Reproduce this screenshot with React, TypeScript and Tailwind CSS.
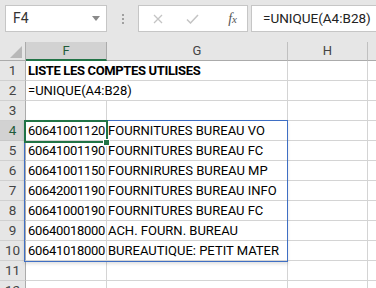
import React from "react";

type Row = { n: number; f?: string; g?: string; bold?: boolean; span?: boolean };

const rows: Row[] = [
  { n: 1, f: "LISTE LES COMPTES UTILISES", bold: true, span: true },
  { n: 2, f: "=UNIQUE(A4:B28)", span: true },
  { n: 3 },
  { n: 4, f: "60641001120", g: "FOURNITURES BUREAU VO" },
  { n: 5, f: "60641001190", g: "FOURNITURES BUREAU FC" },
  { n: 6, f: "60641001150", g: "FOURNIRURES BUREAU MP" },
  { n: 7, f: "60642001190", g: "FOURNITURES BUREAU INFO" },
  { n: 8, f: "60641000190", g: "FOURNITURES BUREAU FC" },
  { n: 9, f: "60640018000", g: "ACH. FOURN. BUREAU" },
  { n: 10, f: "60641018000", g: "BUREAUTIQUE: PETIT MATER" },
  { n: 11 },
  { n: 12 },
];

const font = { fontFamily: "Roboto, 'Liberation Sans', sans-serif" };

export default function App() {
  return (
    <div className="w-[376px] h-[288px] overflow-hidden bg-white text-[#222]" style={font}>
      {/* Formula bar */}
      <div className="h-[42px] bg-[#e6e6e6] flex items-start pt-[5px] pl-[5px]">
        <div className="w-[102px] h-[27px] bg-white border border-[#c6c6c6] flex items-center pl-[7px] pr-[6px] justify-between">
          <span className="text-[14px] text-[#333]">F4</span>
          <svg width="8" height="5" viewBox="0 0 8 5"><path d="M0 0h8L4 5z" fill="#8a8a8a" /></svg>
        </div>
        <div className="w-[31px] h-[27px] flex flex-col items-center justify-center gap-[2px]">
          <span className="w-[2px] h-[2px] bg-[#a0a0a0]" />
          <span className="w-[2px] h-[2px] bg-[#a0a0a0]" />
          <span className="w-[2px] h-[2px] bg-[#a0a0a0]" />
        </div>
        <div className="w-[110px] h-[27px] bg-white border border-[#c6c6c6] flex items-center">
          <svg className="ml-[14px]" width="10" height="10" viewBox="0 0 10 10">
            <path d="M1 1L9 9M9 1L1 9" stroke="#c4c4c4" strokeWidth="1.3" />
          </svg>
          <svg className="ml-[23px]" width="13" height="10" viewBox="0 0 13 10">
            <path d="M1 5.5L4.5 9L12 1" stroke="#c4c4c4" strokeWidth="1.5" fill="none" />
          </svg>
          <span
            className="ml-auto mr-[10px] text-[14px] italic text-[#555]"
            style={{ fontFamily: "'Liberation Serif', serif" }}
          >
            f<span className="text-[11px]">x</span>
          </span>
        </div>
        <div className="ml-[3px] flex-1 h-[27px] bg-white border border-[#c6c6c6] border-r-0 flex items-center pl-[11px]">
          <span className="text-[13.5px] text-[#222] whitespace-nowrap">=UNIQUE(A4:B28)</span>
        </div>
      </div>

      {/* Grid */}
      <div className="relative">
        <div className="grid grid-cols-[26px_81px_181px_80px_1fr]">
          {/* header */}
          <div className="h-[19px] bg-[#e6e6e6] border-r border-b border-[#ababab] relative">
            <svg className="absolute right-[3px] bottom-[2px]" width="12" height="12" viewBox="0 0 12 12">
              <path d="M12 0V12H0z" fill="#b8b8b8" />
            </svg>
          </div>
          <div className="h-[19px] bg-[#d2d2d2] border-r border-[#ababab] border-b-2 border-b-[#217346] flex items-center justify-center text-[13px] text-[#1f5c3a]">
            F
          </div>
          <div className="h-[19px] bg-[#e6e6e6] border-r border-b border-[#c0c0c0] border-b-[#ababab] flex items-center justify-center text-[13px] text-[#444]">
            G
          </div>
          <div className="h-[19px] bg-[#e6e6e6] border-r border-b border-[#c0c0c0] border-b-[#ababab] flex items-center justify-center text-[13px] text-[#444]">
            H
          </div>
          <div className="h-[19px] bg-[#e6e6e6] border-b border-[#ababab]" />

          {rows.map((r) => (
            <React.Fragment key={r.n}>
              <div
                className={
                  r.n === 4
                    ? "h-[20px] bg-[#d2d2d2] border-r border-b border-[#ababab] border-b-[#c8c8c8] flex items-center justify-center text-[13.5px] text-[#1f5c3a]"
                    : "h-[20px] bg-[#e6e6e6] border-r border-b border-[#ababab] border-b-[#d0d0d0] flex items-center justify-center text-[13.5px] text-[#444]"
                }
              >
                {r.n}
              </div>
              {r.span ? (
                <div
                  className={
                    r.bold
                      ? "col-span-2 h-[20px] border-r border-b border-[#d4d4d4] flex items-center pl-[2px] whitespace-nowrap text-[13px] text-black font-bold tracking-[-0.35px]"
                      : "col-span-2 h-[20px] border-r border-b border-[#d4d4d4] flex items-center pl-[2px] whitespace-nowrap text-[13px] text-black"
                  }
                >
                  {r.f}
                </div>
              ) : (
                <>
                  <div className="h-[20px] border-r border-b border-[#d4d4d4] flex items-center pl-[2px] whitespace-nowrap text-[13px] tracking-[-0.3px] text-black">
                    {r.f}
                  </div>
                  <div className="h-[20px] border-r border-b border-[#d4d4d4] flex items-center pl-[1px] whitespace-nowrap overflow-hidden text-[13px] text-black">
                    {r.g}
                  </div>
                </>
              )}
              <div className="h-[20px] border-r border-b border-[#d4d4d4]" />
              <div className="h-[20px] border-b border-[#d4d4d4]" />
            </React.Fragment>
          ))}
        </div>

        {/* spill range border */}
        <div className="absolute left-[24px] top-[78px] w-[264px] h-[142px] border border-[#3f6fc4] shadow-[0_2px_3px_rgba(0,0,0,0.12)] pointer-events-none" />
        {/* active cell */}
        <div className="absolute left-[24px] top-[78px] w-[84px] h-[23px] border-2 border-[#217346] pointer-events-none" />
        <div className="absolute left-[103px] top-[97px] w-[7px] h-[7px] bg-[#217346] border border-white pointer-events-none" />
      </div>
    </div>
  );
}
